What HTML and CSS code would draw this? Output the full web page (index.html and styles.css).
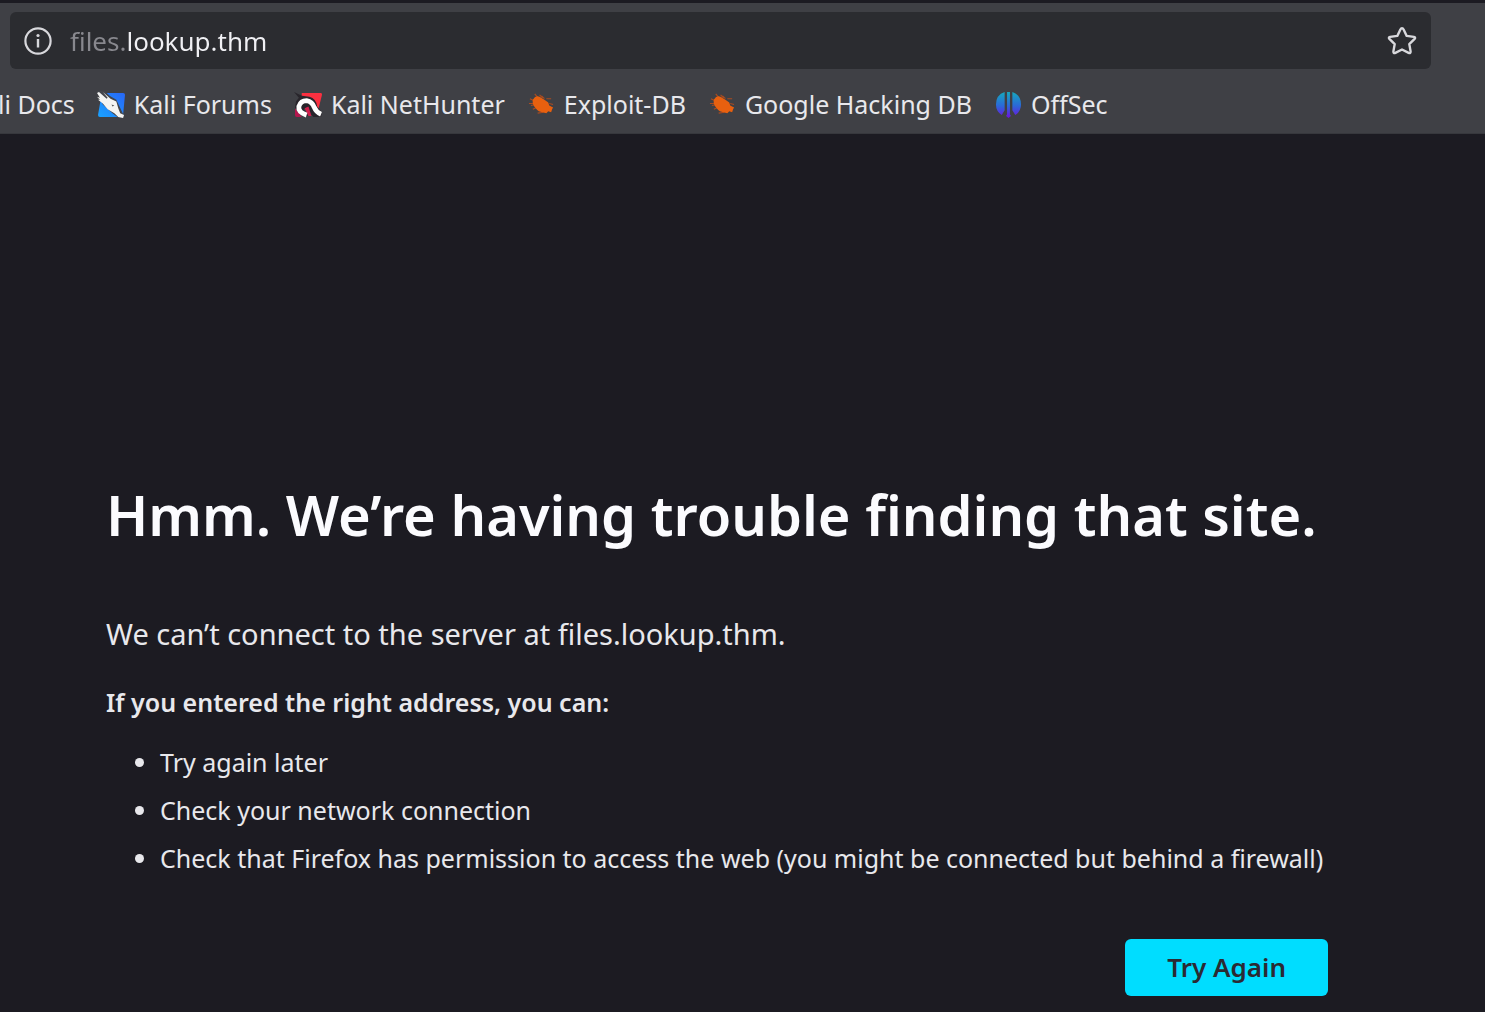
FILE: index.html
```html
<!DOCTYPE html>
<html lang="en">
<head>
<meta charset="utf-8">
<title>Server Not Found</title>
<link rel="stylesheet" href="styles.css">
</head>
<body>
<svg class="defs" aria-hidden="true">
  <symbol id="bug" viewBox="0 0 28 28">
    <path fill="none" stroke="#a94b20" stroke-width="1.200" d="M7 3l4 5M2 8l6 3M1 13l7 0M5 19l6-3M3 15l5-1M10 23l6-1M14 5l3 3M19 8l5 0M22 13l4 1M12 4l3 3"/>
    <path fill="#e8600f" d="M5 9q3-5 7-3l5 3 4 3 1 3 4 2-1 2-1 3-3-1-2 2-4-1q-4 0-7-4-4-4-3-9z"/>
  </symbol>
</svg>
<header class="chrome">
  <form class="urlbar">
    <svg class="info" viewBox="0 0 28 28" aria-hidden="true"><circle cx="14" cy="14" r="12.6" fill="none" stroke="currentColor" stroke-width="2.200"/><path d="M14 12v8.500" stroke="currentColor" stroke-width="2.400"/><circle cx="14" cy="8.500" r="1.600" fill="currentColor"/></svg>
    <input class="address" type="text" aria-label="Address" value="files.lookup.thm">
    <button class="star" type="button" aria-label="Bookmark this page"><svg viewBox="0 0 30 30"><path d="M15 2.200q1 0 1.500 1.100l3.200 6.600 7.200 1q2 .5.700 2l-5.300 5.200 1.300 7.300q0 2.300-2 1.500L15 23.500l-6.600 3.400q-2 .8-2-1.500l1.300-7.300-5.300-5.200q-1.300-1.500.7-2l7.200-1 3.200-6.600q.5-1.100 1.500-1.100z" fill="none" stroke="currentColor" stroke-width="2.400" stroke-linejoin="round"/></svg></button>
  </form>
  <nav class="bookmarks" aria-label="Bookmarks">
    <a href="#">li Docs</a>
    <a href="#"><svg viewBox="0 0 30 28" aria-hidden="true"><defs><linearGradient id="blue" x1="0" y1="1" x2="1" y2="0"><stop offset="0" stop-color="#19a2ff"/><stop offset="1" stop-color="#2866f6"/></linearGradient></defs><path fill="url(#blue)" d="M5 2h22q2 0 2 2l-2 21q0 2-2 2H3q-2 0-2-2z"/><path fill="#43454b" d="M0 0h8l5 5 7 4 8 17-4 3-8-6-10-9z"/><path fill="#f4f4f2" d="M2 1l8 7 1-1-5-6 8 7 6 3 2 7 2 5 4 2-1 3-5-1-4-4-7-4-5-6-5-4 2 0-3-3 3 1-3-5z"/><path d="M15 14l3 1-2 1z" fill="#555"/></svg>Kali Forums</a>
    <a href="#"><svg viewBox="0 0 30 28" aria-hidden="true"><path fill="#fb3040" d="M8 2h20q1 0 1 2l-4 16L8 7z"/><path fill="#b5174e" d="M1 18l7 9H3q-2 0-2-2z"/><path fill="#28252b" d="M0 1l8 4 8 1q7 2 8 10l5 6-1 5h-8l-5-6-2-4-3 2 5 7-9-2-5-7 1-6 3-4z"/><path fill="#d31f4c" d="M11 18l4-2 3 10h-3z"/><path fill="none" stroke="#fff" stroke-width="5" d="M13 25q-9-3-8-9 2-6 8-6 6 1 8 7 2 5 7 7"/></svg>Kali NetHunter</a>
    <a href="#"><svg aria-hidden="true"><use href="#bug"/></svg>Exploit-DB</a>
    <a href="#"><svg aria-hidden="true"><use href="#bug"/></svg>Google Hacking DB</a>
    <a href="#"><svg viewBox="0 0 28 28" aria-hidden="true"><defs><linearGradient id="teal" x1="0" y1="0" x2="0" y2="28" gradientUnits="userSpaceOnUse"><stop offset="0" stop-color="#14aebc"/><stop offset=".55" stop-color="#2b68d8"/><stop offset="1" stop-color="#6f10df"/></linearGradient></defs><path fill="url(#teal)" d="M10 1Q1 4 1 14q0 7 6 11l3-5zM12.500 1h3v23l1 2-2.500 2-2.500-2 1-2zM18 1q9 3 9 13 0 7-6 11l-3-5z"/></svg>OffSec</a>
  </nav>
</header>
<main class="error">
  <h1>Hmm. We’re having trouble finding that site.</h1>
  <p class="lead">We can’t connect to the server at files.lookup.thm.</p>
  <p class="hint">If you entered the right address, you can:</p>
  <ul>
    <li>Try again later</li>
    <li>Check your network connection</li>
    <li>Check that Firefox has permission to access the web (you might be connected but behind a firewall)</li>
  </ul>
  <div class="actions"><button class="retry" type="button">Try Again</button></div>
</main>
</body>
</html>
```
FILE: styles.css
```css
* { box-sizing: border-box; }
body {
  margin: 0;
  min-height: 100vh;
  background: #1c1b22;
  color: #fbfbfe;
  font-family: "Noto Sans", sans-serif;
  font-size: 25px;
  overflow-x: hidden;
}
.defs { position: absolute; width: 0; height: 0; }
.chrome {
  height: 134px;
  padding: 9px 54px 0 10px;
  background: #3f4045;
  border-top: 3px solid #1c1b22;
  border-bottom: 1px solid #37383d;
}
.urlbar {
  display: flex;
  align-items: center;
  height: 57px;
  padding: 0 14px;
  border-radius: 6px;
  background: #2b2c30;
}
.info { width: 28px; height: 28px; color: #d8d8dc; }
.address {
  flex: 1;
  min-width: 0;
  margin: 0 16px 0 18px;
  padding: 0;
  border: 0;
  outline: 0;
  font: inherit;
  font-size: 26px;
  color: transparent;
  background: linear-gradient(90deg, #88888e 57px, #f0f0f4 57px);
  -webkit-background-clip: text;
  background-clip: text;
}
.star { padding: 0; border: 0; background: none; color: #d8d8dc; }
.star svg { display: block; width: 30px; height: 30px; }
.bookmarks {
  display: flex;
  align-items: center;
  gap: 22px;
  height: 70px;
  margin-left: -12px;
  white-space: nowrap;
}
.bookmarks a {
  display: flex;
  align-items: center;
  gap: 8px;
  color: #e8e8ec;
  text-decoration: none;
}
.bookmarks svg { width: 29px; height: 27px; }
.error { padding: 342px 106px 0; }
h1 { margin: 0; font-size: 56px; line-height: 76px; font-weight: 600; }
p { margin: 0; color: #e8e8ec; }
.lead { margin-top: 62px; font-size: 29px; line-height: 40px; }
.hint { margin-top: 30px; line-height: 36px; font-weight: 600; }
ul { margin: 18px 0 0; padding-left: 54px; color: #e8e8ec; }
li { line-height: 48px; white-space: nowrap; }
.actions { display: flex; justify-content: flex-end; margin-top: 57px; padding-right: 51px; }
.retry {
  padding: 0 42px;
  border: 0;
  border-radius: 6px;
  background: #00ddff;
  color: #2b2a33;
  font: inherit;
  font-size: 26px;
  font-weight: 600;
  line-height: 57px;
}
```
